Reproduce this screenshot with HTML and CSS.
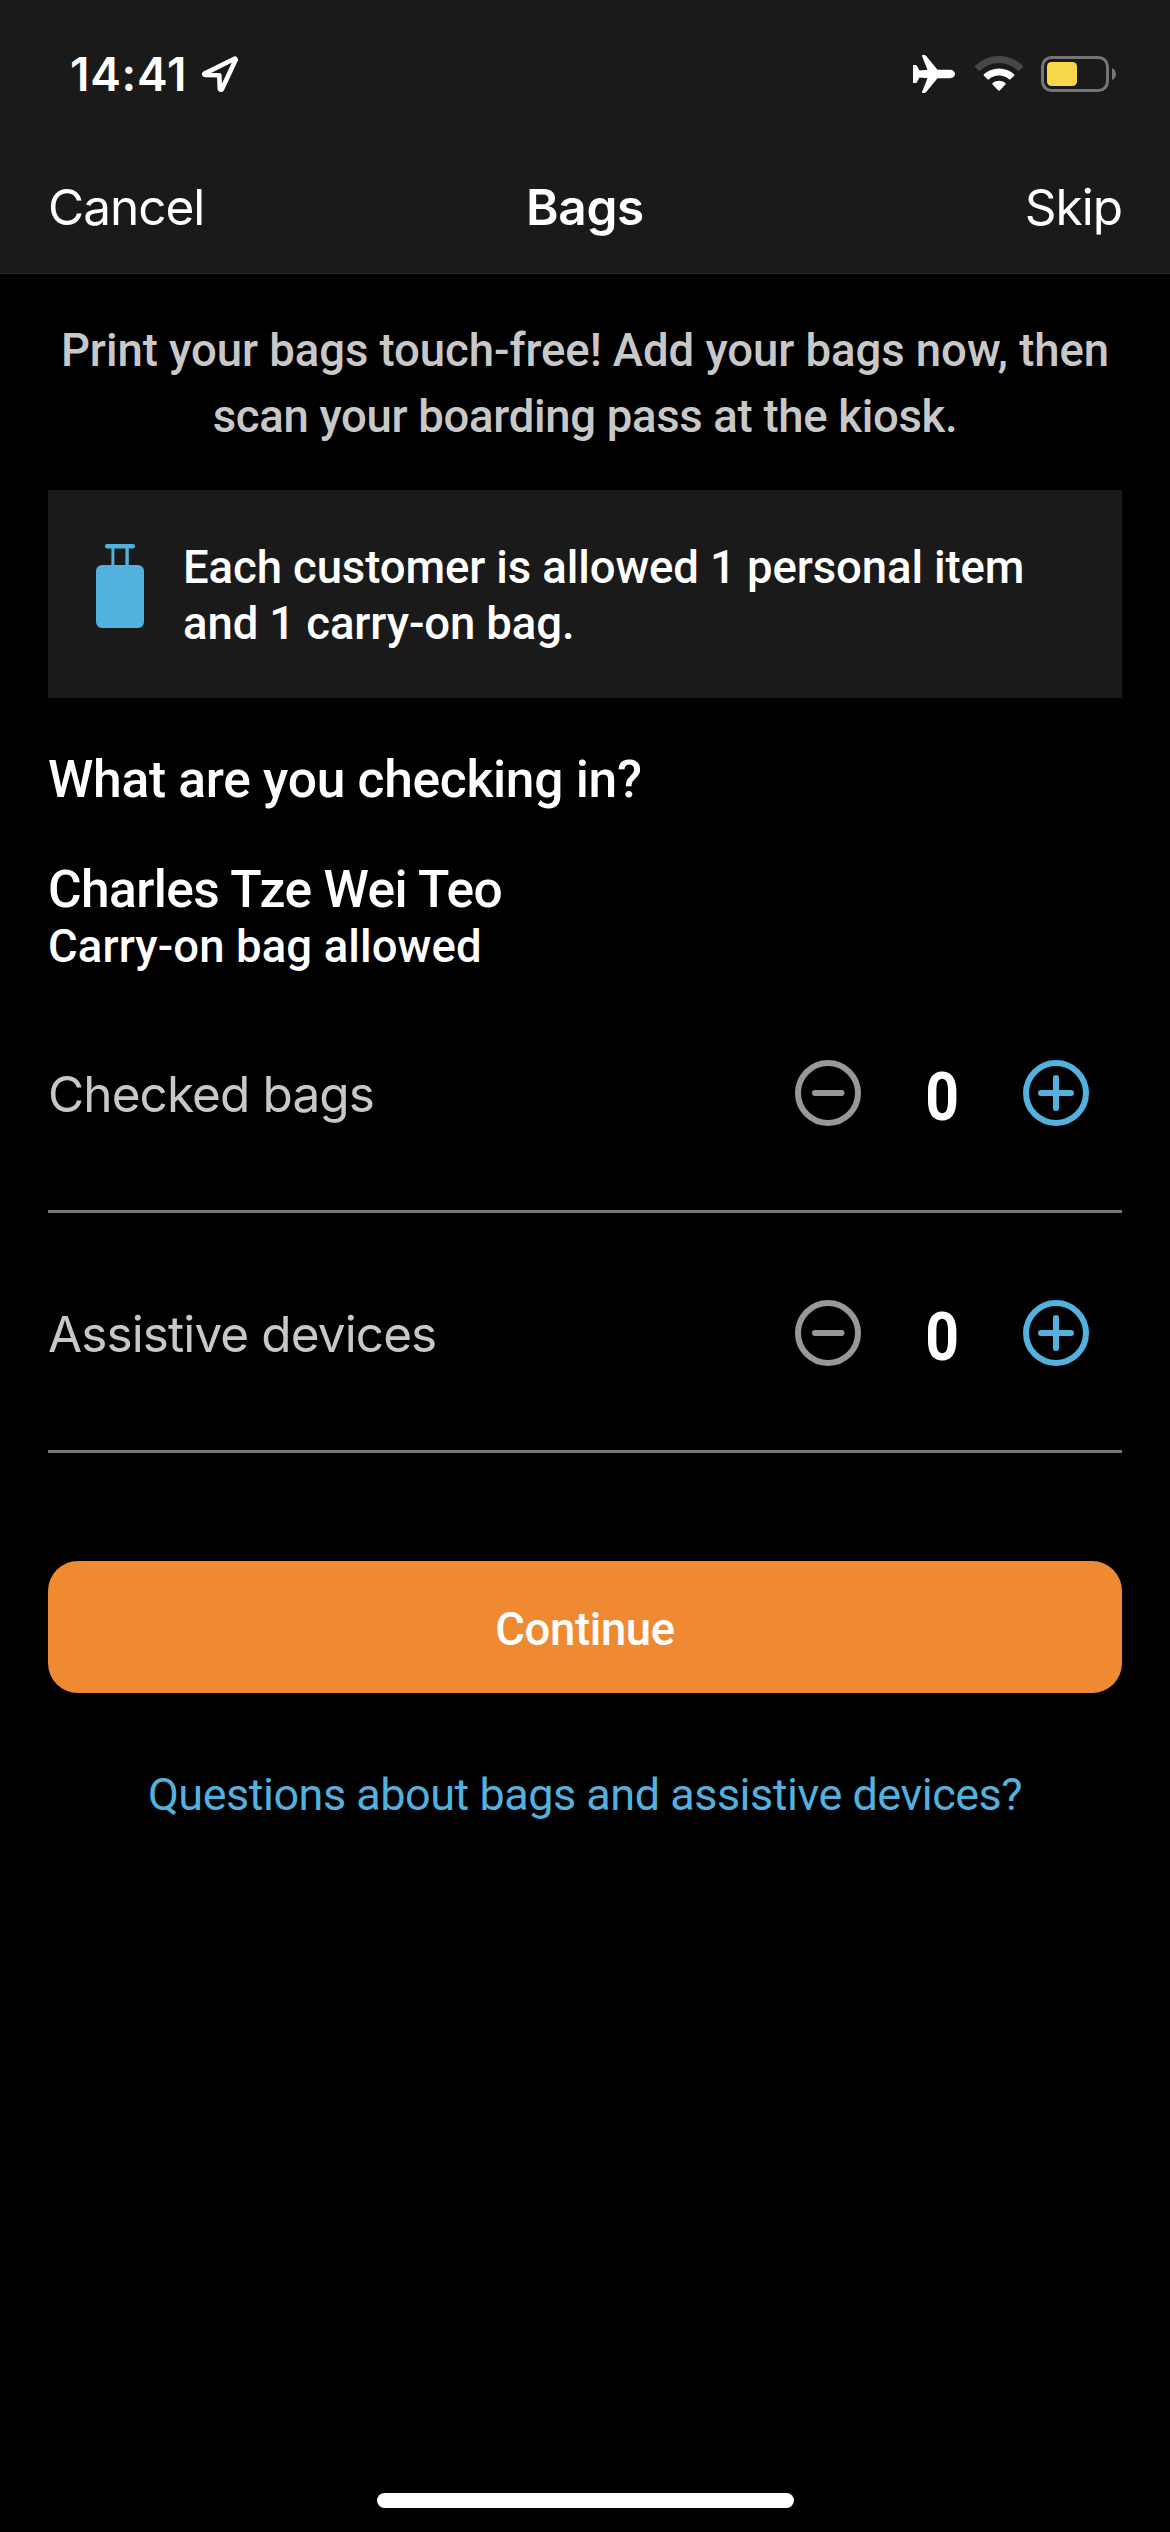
FILE: index.html
```
<!DOCTYPE html>
<html lang="en">
<head>
  <meta charset="UTF-8">
  <meta name="viewport" content="width=device-width, initial-scale=1.0">
  <title>Bags</title>
  <link rel="stylesheet" href="styles.css">
</head>
<body>
  <header>
    <div class="status-bar">
      <div class="status-left">
        <span class="time">14:41</span>
        <svg class="location" width="38" height="38" viewBox="0 0 38 38" fill="none" stroke="#fff" stroke-width="4.6" stroke-linejoin="round">
          <path d="M34 3.5 L3.5 18.6 Q2.6 19.9 4 20 L18.3 20.2 L18.8 34 Q20 35.6 21 34 L34.8 4.6 Z"/>
        </svg>
      </div>
      <div class="status-right">
        <svg class="plane" width="42" height="38" viewBox="0 0 42 38" fill="#fff">
          <path d="M0 10 H2.5 Q3.5 10 4 11 L6.5 15.5 L14.5 14.8 L9 1 Q8.8 0 9.8 0 H11.4 Q12.4 0 13 .8 L24.5 14.8 H37 C40 14.8 42 17 42 19 C42 21 40 23.2 37 23.2 H24.5 L13 37.2 Q12.4 38 11.4 38 H9.8 Q8.8 38 9 37 L14.5 23.2 L6.5 22.5 L4 27 Q3.5 28 2.5 28 H0 Z"/>
        </svg>
        <svg class="wifi" width="50" height="37" viewBox="0 0 50 37">
          <path fill="#474747" d="M1.2 10.6 Q.4 11.4 1.2 12.2 L4.7 15.6 Q5.4 16.2 6.2 15.5 A27.5 27.5 0 0 1 43.8 15.5 Q44.6 16.2 45.3 15.6 L48.8 12.2 Q49.6 11.4 48.8 10.6 A34.5 34.5 0 0 0 1.2 10.6 Z"/>
          <path fill="#fff" d="M9.9 19.3 Q9.2 20 9.9 20.8 L13.5 24.3 Q14.2 24.9 15 24.2 A15.2 15.2 0 0 1 35 24.2 Q35.8 24.9 36.5 24.3 L40.1 20.8 Q40.8 20 40.1 19.3 A22.4 22.4 0 0 0 9.9 19.3 Z"/>
          <path fill="#fff" d="M18.6 28 Q17.9 28.7 18.6 29.4 L24.3 35.5 Q25 36.1 25.7 35.5 L31.4 29.4 Q32.1 28.7 31.4 28 A10 10 0 0 0 18.6 28 Z"/>
        </svg>
        <svg class="battery" width="76" height="36" viewBox="0 0 76 36">
          <rect x="1.5" y="1.5" width="65" height="33" rx="9" fill="none" stroke="#757575" stroke-width="3"/>
          <rect x="6" y="6" width="30" height="24" rx="4.5" fill="#f8d74a"/>
          <path d="M71 12 Q75 14 75 18 Q75 22 71 24 Z" fill="#757575"/>
        </svg>
      </div>
    </div>
    <nav>
      <button>Cancel</button>
      <h1>Bags</h1>
      <button class="skip">Skip</button>
    </nav>
  </header>
  <main>
    <p class="intro">Print your bags touch-free! Add your bags now, then<br><span>scan your boarding pass at the kiosk.</span></p>
    <div class="notice">
      <svg class="bag-icon" width="48" height="84" viewBox="0 0 48 84" fill="#52b1de">
        <rect x="9" y="0" width="30" height="4.6" rx="2"/>
        <rect x="15.4" y="3" width="3" height="19"/>
        <rect x="29.4" y="3" width="3.4" height="19"/>
        <rect x="0" y="21" width="48" height="63" rx="6"/>
      </svg>
      <p>Each customer is allowed 1 personal item<br>and 1 carry-on bag.</p>
    </div>
    <h2>What are you checking in?</h2>
    <h3>Charles Tze Wei Teo</h3>
    <p class="allowance">Carry-on bag allowed</p>
    <div class="row">
      <span class="label">Checked bags</span>
      <div class="stepper">
        <button aria-label="Remove checked bag">
          <svg width="66" height="66" viewBox="0 0 66 66" fill="none" stroke="#98989b" stroke-width="6" stroke-linecap="round">
            <circle cx="33" cy="33" r="30"/>
            <path d="M20 33 H46.5"/>
          </svg>
        </button>
        <span class="count">0</span>
        <button aria-label="Add checked bag">
          <svg width="66" height="66" viewBox="0 0 66 66" fill="none" stroke="#52b1de" stroke-width="6" stroke-linecap="round">
            <circle cx="33" cy="33" r="30"/>
            <path d="M18 33 H48 M33 18 V48"/>
          </svg>
        </button>
      </div>
    </div>
    <div class="row">
      <span class="label">Assistive devices</span>
      <div class="stepper">
        <button aria-label="Remove assistive device">
          <svg width="66" height="66" viewBox="0 0 66 66" fill="none" stroke="#98989b" stroke-width="6" stroke-linecap="round">
            <circle cx="33" cy="33" r="30"/>
            <path d="M20 33 H46.5"/>
          </svg>
        </button>
        <span class="count">0</span>
        <button aria-label="Add assistive device">
          <svg width="66" height="66" viewBox="0 0 66 66" fill="none" stroke="#52b1de" stroke-width="6" stroke-linecap="round">
            <circle cx="33" cy="33" r="30"/>
            <path d="M18 33 H48 M33 18 V48"/>
          </svg>
        </button>
      </div>
    </div>
    <button class="continue">Continue</button>
    <a class="help">Questions about bags and assistive devices?</a>
  </main>
  <div class="home-indicator"></div>
</body>
</html>
```
FILE: styles.css
```
:root {
  --bg: #000;
  --panel: #1a1a1a;
  --fg: #fff;
  --muted: #c8c8c8;
  --line: #767676;
  --blue: #52b1de;
  --orange: #ef8a33;
}
* { box-sizing: border-box; }
body { margin: 0; height: 2532px; display: flex; flex-direction: column; background: var(--bg); color: var(--fg); font-family: Roboto, sans-serif; font-weight: 500; overflow: hidden; }
button { background: none; border: none; padding: 0; color: inherit; font: inherit; cursor: pointer; }
svg { display: block; flex: none; }
h1, h2, h3, p { margin: 0; font-weight: 500; }

header { background: var(--panel); height: 274px; border-bottom: 1px solid #262626; font-family: Inter, sans-serif; }
.status-bar { height: 141px; padding: 7px 53px 0 70px; display: flex; align-items: center; justify-content: space-between; }
.status-left, .status-right { display: flex; align-items: center; }
.time { font-size: 46px; font-weight: 600; letter-spacing: 0.75px; }
.location { margin-left: 14px; }
.wifi { margin-left: 19px; margin-top: -2px; }
.battery { margin-left: 17px; }
nav { height: 132px; padding: 0 48px; display: grid; grid-template-columns: 1fr auto 1fr; align-items: center; font-size: 49.5px; }
nav button { justify-self: start; font-weight: 400; letter-spacing: -1px; }
nav h1 { font-size: 49.5px; font-weight: 600; letter-spacing: -0.35px; }
nav .skip { justify-self: end; }

main { flex: 1; padding: 44px 48px 0; display: flex; flex-direction: column; }
.intro { color: var(--muted); font-size: 45.5px; line-height: 66px; text-align: center; white-space: nowrap; letter-spacing: -0.06px; }
.intro span { letter-spacing: -0.32px; }
.notice { margin-top: 40px; height: 208px; padding: 50px 48px 0; display: flex; background: var(--panel); font-size: 45.5px; line-height: 56px; letter-spacing: -0.11px; white-space: nowrap; }
.bag-icon { margin: 4px 39px 0 0; }
h2, h3 { font-size: 51.5px; line-height: 60px; }
h2 { margin-top: 52px; letter-spacing: -0.27px; }
h3 { margin-top: 50px; letter-spacing: -0.6px; }
.allowance { padding-top: 1px; font-size: 45.5px; line-height: 52px; letter-spacing: 0.11px; }

.row { height: 240px; padding: 3px 33px 0 0; display: flex; align-items: center; justify-content: space-between; border-bottom: 3px solid var(--line); }
.label { padding-top: 1px; color: var(--muted); font-family: Inter, sans-serif; font-size: 49.5px; font-weight: 400; letter-spacing: -0.9px; }
.stepper { width: 294px; display: flex; align-items: center; justify-content: space-between; }
.count { padding-top: 8px; font-size: 67px; font-weight: 700; line-height: 70px; transform: scaleX(0.88); }

.continue { margin-top: 108px; height: 132px; padding-top: 4px; border-radius: 30px; background: var(--orange); font-size: 45.5px; letter-spacing: -0.4px; }
.help { margin-top: 74px; color: var(--blue); font-size: 45px; font-weight: 400; line-height: 56px; letter-spacing: -0.5px; text-align: center; }
.home-indicator { width: 417px; height: 15px; margin: 0 auto 24px; border-radius: 8px; background: #fff; }
```
